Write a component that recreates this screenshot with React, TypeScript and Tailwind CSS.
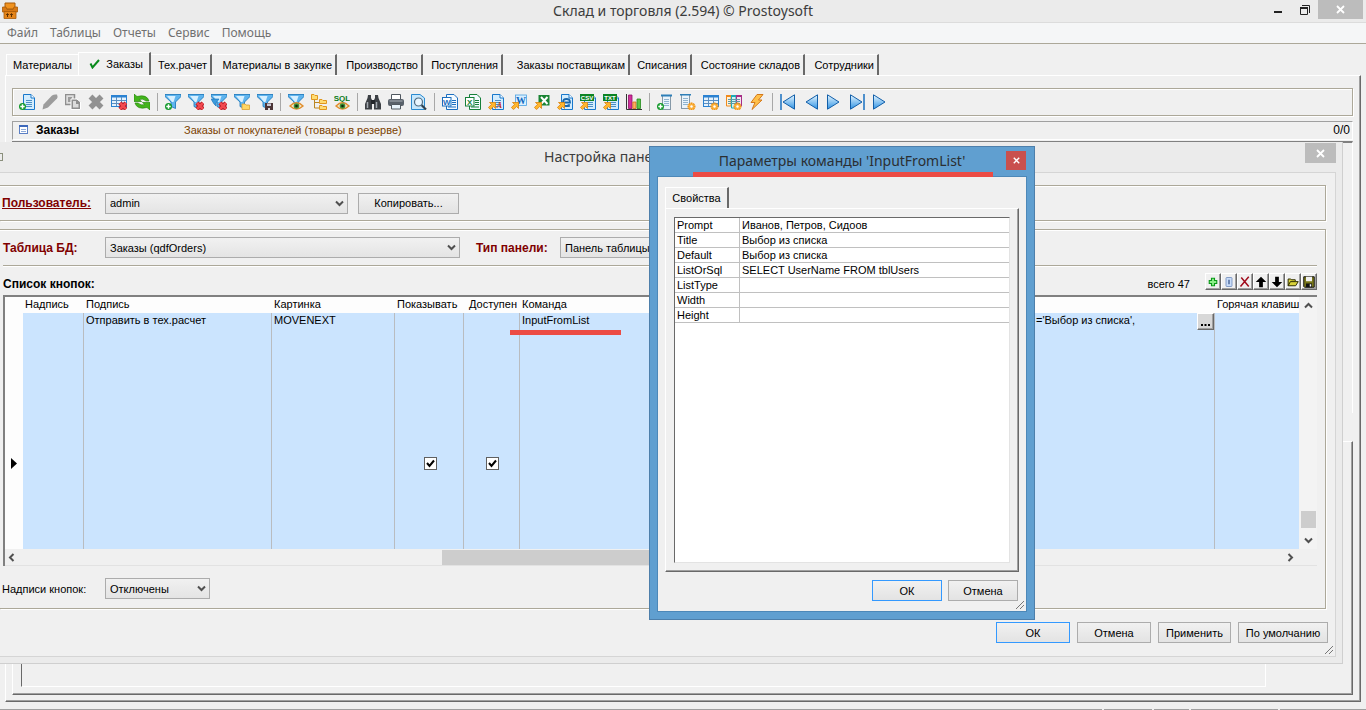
import type { ReactNode } from "react";
import { clsx } from "clsx";

/* ---------- icon parts ---------- */

const Svg = ({ children, size = 16 }: { children: ReactNode; size?: number }) => (
    <svg width={size} height={size} viewBox="0 0 16 16" fill="none" aria-hidden="true" className="shrink-0">
        {children}
    </svg>
);

const Doc = () => (
    <g>
        <path d="M4.5 .5H12L15.5 4V15.5H4.5Z" fill="#d3ecfd" stroke="#1878cc" />
        <path d="M12 .5V4H15.5" fill="#fff" stroke="#1878cc" />
        <path d="M7 6.5H13M7 8.5H13M7 10.5H13M7 12.5H13" stroke="#4b8fc4" />
    </g>
);

const Funnel = () => (
    <g>
        <path d="M0 .5H16V2.5L10.5 8V14.5L6 12.5V8L0 2.5Z" fill="#5fb4ee" stroke="#1271b8" strokeWidth=".8" />
        <path d="M2 2H10.5L8.5 8H7Z" fill="#d8f0ff" />
    </g>
);

const Plus = () => (
    <g>
        <circle cx="3.5" cy="12.5" r="3.5" fill="#13992b" />
        <path d="M3.5 10.3V14.7M1.3 12.5H5.7" stroke="#fff" strokeWidth="1.5" />
    </g>
);

const RedX = () => (
    <g>
        <path d="M9 9L15 15M15 9L9 15" stroke="#a8121c" strokeWidth="4.4" />
        <path d="M9 9L15 15M15 9L9 15" stroke="#f2484e" strokeWidth="2.6" />
    </g>
);

const Eye = () => (
    <g>
        <path d="M2 12Q8.5 5.5 15 12Q8.5 18 2 12Z" fill="#f4ead0" stroke="#e08e2e" strokeWidth="1.4" />
        <circle cx="8.5" cy="12" r="2.8" fill="#3f8f35" />
        <circle cx="8.5" cy="12" r="1.3" fill="#10280e" />
    </g>
);

const Gear = () => (
    <g>
        <path d="M11.5 7.5V15.5M7.5 11.5H15.5M8.7 8.7L14.3 14.3M14.3 8.7L8.7 14.3" stroke="#f2920c" strokeWidth="2" />
        <circle cx="11.5" cy="11.5" r="2.8" fill="#fbb03a" />
        <circle cx="11.5" cy="11.5" r="1.2" fill="#fff" />
    </g>
);

const Export = () => (
    <path d="M1.5 8.5H7.5V14.5L5.6 12.6L2.5 15.6L.4 13.5L3.5 10.4Z" fill="#ffb62e" stroke="#d9810a" strokeWidth=".8" />
);

const Table = () => (
    <g>
        <rect x=".5" y="1.5" width="15" height="11" fill="#e4f2fd" stroke="#2a82d2" />
        <path d="M1 2.5H15" stroke="#2a82d2" strokeWidth="2" />
        <path d="M1 6.5H15M1 9.5H15M5.5 3V12M10.5 3V12" stroke="#5a8fc2" />
    </g>
);

const List = () => (
    <g>
        <rect x="5.5" y="1.5" width="8" height="14" fill="#eaf4fb" stroke="#8699a8" />
        <path d="M4 1.5H15" stroke="#2d7fb8" strokeWidth="2" />
        <path d="M7 5.5H12M7 7.5H12M7 9.5H12M7 11.5H12" stroke="#8fb4d0" />
    </g>
);

const Badge = ({ text, fill }: { text: string; fill: string }) => (
    <g>
        <rect x="0" y="0" width="14" height="7" fill={fill} />
        <text x="7" y="5.8" fontSize="6" fontWeight="700" fill="#fff" textAnchor="middle" fontFamily="Liberation Sans, sans-serif">{text}</text>
    </g>
);

const OfficeDoc = ({ letter, fill }: { letter: string; fill: string }) => (
    <g>
        <path d="M4.5 .5H12L15.5 4V15.5H4.5Z" fill="#f3faff" stroke={fill} />
        <path d="M10 6.5H14M10 8.5H14M10 10.5H14M6 13H14" stroke={fill} />
        <rect x=".5" y="3.5" width="8.5" height="8.5" fill="#fff" stroke={fill} />
        <text x="4.7" y="10.5" fontSize="8" fontWeight="700" fill={fill} textAnchor="middle" fontFamily="Liberation Sans, sans-serif">{letter}</text>
    </g>
);

const Nav = ({ flip, bar }: { flip?: boolean; bar?: boolean }) => (
    <g transform={flip ? "translate(16 0) scale(-1 1)" : undefined}>
        <path d="M1.5 .8L13 8L1.5 15.2Z" fill="url(#nav)" stroke="#125ea8" strokeLinejoin="round" />
        {bar && <path d="M15 0V16" stroke="#1a70c0" strokeWidth="1.5" />}
    </g>
);

type Tool = { label: string; icon: ReactNode } | null;

const tools: Tool[] = [
    { label: "Добавить", icon: <><Doc /><Plus /></> },
    { label: "Изменить", icon: <path d="M.5 15.5L1.5 10.5L10 1.5Q12 0 15 .5Q16 2.5 15 4.5L6 13.5Z" fill="#9c9c9c" /> },
    {
        label: "Копировать запись",
        icon: (
            <>
                <path d="M.5 .5H9.5V10.5H.5Z" fill="#dedede" stroke="#8f8f8f" strokeWidth="1.5" />
                <path d="M3 3H7V8H3Z" fill="#9c9c9c" />
                <path d="M6 5H12L15.5 8V15.5H6Z" fill="#8f8f8f" stroke="#fff" />
                <path d="M8 7H11V10H13.5V13.5H8Z" fill="#dcdcdc" />
            </>
        ),
    },
    { label: "Удалить", icon: <path d="M2.5 2.5L13.5 13.5M13.5 2.5L2.5 13.5" stroke="#929292" strokeWidth="5.5" /> },
    { label: "Очистить таблицу", icon: <><Table /><RedX /></> },
    {
        label: "Обновить",
        icon: (
            <>
                <path d="M0 0V7.5H7.5L5.2 5.5Q9 4 12 7H15Q13 0 3 2.5Z" fill="#43b51c" stroke="#2a8a10" strokeWidth=".7" />
                <path d="M16 16V8.5H8.500L10.8 10.5Q7 12 4 9H1Q3 16 13 13.5Z" fill="#43b51c" stroke="#2a8a10" strokeWidth=".7" />
            </>
        ),
    },
    null,
    { label: "Добавить фильтр", icon: <><Funnel /><Plus /></> },
    { label: "Удалить фильтр", icon: <><Funnel /><RedX /></> },
    { label: "Удалить все фильтры", icon: <><Funnel /><path d="M0 5H8L5 9V12L3 10Z" fill="#3d9bdd" stroke="#1271b8" strokeWidth=".6" /><RedX /></> },
    { label: "Открыть фильтр", icon: <><Funnel /><path d="M8 10H11L12 11H15.5V15.5H8Z" fill="#ffd766" stroke="#dca030" strokeWidth=".8" /></> },
    { label: "Сохранить фильтр", icon: <><Funnel /><path d="M8 9H16V16H8Z" fill="#4b3436" /><path d="M10 9.5H14V12H10Z" fill="#c9c9d6" /><path d="M11 14H13V16H11Z" fill="#ddd" /></> },
    null,
    { label: "Просмотр фильтра", icon: <><Funnel /><Eye /></> },
    {
        label: "Дерево",
        icon: (
            <>
                <path d="M3.5 5V14H9M3.5 8.5H9" stroke="#b98622" />
                <path d="M.5 .5H3L4 1.5H6.5V5.5H.5ZM8.5 5.5H11L12 6.5H15.5V9.5H8.5ZM8.5 11.5H11L12 12.5H15.5V15.5H8.5Z" fill="#ffdc73" stroke="#e0971f" />
            </>
        ),
    },
    {
        label: "SQL",
        icon: (
            <>
                <text x="8" y="6.5" fontSize="8" fontWeight="700" fill="#087a16" textAnchor="middle" fontFamily="Liberation Sans, sans-serif">SQL</text>
                <Eye />
            </>
        ),
    },
    null,
    {
        label: "Найти",
        icon: (
            <>
                <path d="M3 1H6V4L7 6V15.5H0V10L2.5 4ZM13 1H10V4L9 6V15.5H16V10L13.5 4Z" fill="#3c4045" />
                <path d="M6 6H10V10H6Z" fill="#24272b" />
                <path d="M2.5 8V14M11.5 8V14" stroke="#a3a9b0" strokeWidth="1.5" />
            </>
        ),
    },
    {
        label: "Печать",
        icon: (
            <>
                <path d="M3.5 .5H12.5V6H3.5Z" fill="#fff" stroke="#505860" />
                <rect x="0" y="5" width="16" height="7" rx="2" fill="#59616a" />
                <path d="M1.5 7H14.5" stroke="#aab1b8" />
                <path d="M3.5 10.5H12.5V15H3.5Z" fill="#e8f3fb" stroke="#505860" />
            </>
        ),
    },
    {
        label: "Предварительный просмотр",
        icon: (
            <>
                <path d="M.5 .5H9L13.5 4V15.5H.5Z" fill="#c6e7fc" stroke="#2a8ad0" />
                <path d="M10.5 11L15 15.5" stroke="#31424f" strokeWidth="2.2" />
                <circle cx="7.5" cy="8" r="4" fill="#e9f6ff" stroke="#4f6b80" strokeWidth="1.2" />
            </>
        ),
    },
    null,
    { label: "Документ Word", icon: <OfficeDoc letter="W" fill="#1c6fc0" /> },
    { label: "Документ Excel", icon: <OfficeDoc letter="X" fill="#15803a" /> },
    { label: "Экспорт в Access", icon: <><Doc /><text x="11.5" y="13.5" fontSize="8" fontWeight="700" fontStyle="italic" fill="#d2321e" textAnchor="middle" fontFamily="Liberation Serif, serif">A</text><Export /></> },
    {
        label: "Экспорт в Word",
        icon: (
            <>
                <rect x="4.5" y="1" width="11" height="10.5" fill="#d9efff" stroke="#4aa0e0" strokeWidth=".8" />
                <text x="10" y="9.5" fontSize="10" fontWeight="700" fill="#1268be" textAnchor="middle" fontFamily="Liberation Serif, serif">W</text>
                <Export />
            </>
        ),
    },
    {
        label: "Экспорт в Excel",
        icon: (
            <>
                <rect x="4.5" y="1" width="11" height="10.5" fill="#1b8434" />
                <path d="M7 3L13.5 10M13.5 3L7 10" stroke="#fff" strokeWidth="2" />
                <Export />
            </>
        ),
    },
    {
        label: "Экспорт в HTML",
        icon: (
            <>
                <Doc />
                <path d="M6 8.5H13Q13 5 9.5 5T6 8.500T9.500 12Q11.5 12 12.500 11" fill="#dff1fd" stroke="#1766ac" strokeWidth="1.8" />
                <Export />
            </>
        ),
    },
    { label: "Экспорт в CSV", icon: <><Doc /><Badge text="CSV" fill="#0c8424" /><Export /></> },
    { label: "Экспорт в TXT", icon: <><Doc /><Badge text="TXT" fill="#0c8424" /><Export /></> },
    {
        label: "Диаграмма",
        icon: (
            <>
                <path d="M.5 0V15.5H16" stroke="#333" />
                <path d="M2.5 1H6V14.5H2.5Z" fill="#d22f9c" stroke="#8d1067" strokeWidth=".8" />
                <path d="M6.8 8H10V14.5H6.8Z" fill="#ffae62" stroke="#cf6d1b" strokeWidth=".8" />
                <path d="M11 5H14.5V14.5H11Z" fill="#59c64a" stroke="#248a1c" strokeWidth=".8" />
            </>
        ),
    },
    null,
    { label: "Добавить поле", icon: <><List /><Plus /></> },
    { label: "Свойства поля", icon: <><g transform="translate(-4 -1)"><List /></g><g transform="translate(0 1)"><Gear /></g></> },
    { label: "Свойства таблицы", icon: <><Table /><g transform="translate(0 1)"><Gear /></g></> },
    {
        label: "Настройка столбцов",
        icon: (
            <>
                <path d="M.5 1.5H5V12H.5Z" fill="#fff0d8" stroke="#f08a1c" />
                <path d="M5.5 1.5H10V14H5.5Z" fill="#d0f2f5" stroke="#1ba9b5" />
                <path d="M10.5 1.5H15.5V12H10.5Z" fill="#f6e0f0" stroke="#a52e86" />
                <path d="M0 2H5" stroke="#f08a1c" strokeWidth="2" />
                <path d="M5 2H10" stroke="#1ba9b5" strokeWidth="2" />
                <path d="M10 2H16" stroke="#a52e86" strokeWidth="2" />
                <path d="M2 5.5H14M2 7.5H14M2 9.5H14" stroke="#5f9aa5" />
                <g transform="translate(0 1)"><Gear /></g>
            </>
        ),
    },
    { label: "Выполнить", icon: <path d="M8 .5H14L9.5 6H13L3 15.5L6 8.5H2Z" fill="#ffc04a" stroke="#d4791b" /> },
    null,
    { label: "В начало", icon: <Nav flip bar /> },
    { label: "Назад", icon: <Nav flip /> },
    { label: "Вперед", icon: <Nav /> },
    { label: "В конец", icon: <Nav bar /> },
    { label: "Запуск", icon: <Nav /> },
];

const tabs = [
    { label: "Тех.рачет", width: "w-[61px]" },
    { label: "Материалы в закупке", width: "w-[125px]" },
    { label: "Производство", width: "w-[86px]" },
    { label: "Поступления", width: "w-[80px]" },
    { label: "Заказы поставщикам", width: "w-[127px]" },
    { label: "Списания", width: "w-[62px]" },
    { label: "Состояние складов", width: "w-[113px]" },
    { label: "Сотрудники", width: "w-[74px]" },
];

const params = [
    ["Prompt", "Иванов, Петров, Сидоов"],
    ["Title", "Выбор из списка"],
    ["Default", "Выбор из списка"],
    ["ListOrSql", "SELECT UserName FROM tblUsers"],
    ["ListType", ""],
    ["Width", ""],
    ["Height", ""],
];

const rowTools: { label: string; icon: ReactNode }[] = [
    { label: "Добавить кнопку", icon: <path d="M6 3H10V6H13V10H10V13H6V10H3V6H6Z" fill="#8df08a" stroke="#0a9a18" strokeWidth="1.5" /> },
    { label: "Разделитель", icon: <><rect x="4" y="2" width="8" height="12" rx="1" fill="#c9dcf8" stroke="#6683b5" /><path d="M8 5V11" stroke="#26427c" strokeWidth="1.5" /></> },
    { label: "Удалить кнопку", icon: <path d="M3 2L13 14M13 1L2 14" stroke="#a00c1c" strokeWidth="2" /> },
    { label: "Выше", icon: <path d="M8 1L15 8H10.5V15H5.500V8H1Z" fill="#000" /> },
    { label: "Ниже", icon: <path d="M8 15L15 8H10.5V1H5.500V8H1Z" fill="#000" /> },
    { label: "Открыть", icon: <path d="M1.5 13V4H5L6 5H11V7.5H15L11.5 13ZM1.5 13L4.5 7.5H11" fill="#d8d23a" stroke="#2b2a00" strokeWidth="1.3" /> },
    { label: "Сохранить", icon: <><path d="M1 1H15V15H2L1 14Z" fill="#77751a" stroke="#111" strokeWidth="1.3" /><path d="M4 1H12V7H4Z" fill="#f0f0f0" /><path d="M4 10H12V15H4Z" fill="#111" /><path d="M9 11H11V14H9Z" fill="#fff" /></> },
];

const Chevron = ({ dir = "down" }: { dir?: "up" | "down" | "left" | "right" }) => (
    <svg width="9" height="9" viewBox="0 0 9 9" fill="none" aria-hidden="true" className={clsx("shrink-0", dir === "up" && "rotate-180", dir === "left" && "rotate-90", dir === "right" && "-rotate-90")}>
        <path d="M1 2.5L4.5 6L8 2.5" stroke="#505050" strokeWidth="2" />
    </svg>
);

const Select = ({ id, value, width }: { id: string; value: string; width: string }) => (
    <div className={clsx("relative shrink-0", width)}>
        <select id={id} className="block h-[21px] w-full appearance-none border border-[#acacac] bg-linear-to-b from-[#f1f1f1] to-[#e4e4e4] pl-1 text-[11px] leading-[18px]">
            <option>{value}</option>
        </select>
        <div className="pointer-events-none absolute inset-y-0 right-1 flex items-center">
            <Chevron />
        </div>
    </div>
);

const Button = ({ children, width, primary }: { children: ReactNode; width: string; primary?: boolean }) => (
    <button type="button" className={clsx("h-[21px] shrink-0 border bg-linear-to-b from-[#f1f1f1] to-[#e3e3e3] leading-[18px]", width, primary ? "border-[#3399ff]" : "border-[#acacac]")}>
        {children}
    </button>
);

const Grip = () => (
    <svg width="8" height="8" viewBox="0 0 8 8" aria-hidden="true" className="absolute bottom-0.5 right-0.5">
        <path d="M0 8L8 0M4 8L8 4" stroke="#777" fill="none" />
    </svg>
);

const Cross = ({ size = 9 }: { size?: number }) => (
    <svg width={size} height={size} viewBox="0 0 9 9" aria-hidden="true">
        <path d="M1 1L8 8M8 1L1 8" stroke="#fff" strokeWidth="1.8" />
    </svg>
);

const CheckBox = ({ label }: { label: string }) => (
    <span className="relative mx-auto block size-[13px]">
        <input type="checkbox" defaultChecked aria-label={label} className="block size-[13px] appearance-none border border-[#606060] bg-white" />
        <svg width="13" height="13" viewBox="0 0 13 13" fill="none" aria-hidden="true" className="pointer-events-none absolute inset-0">
            <path d="M3 6L5.5 9L10 3.5" stroke="#000" strokeWidth="2" />
        </svg>
    </span>
);

const raised = "border border-l-white border-t-white border-r-[#696969] border-b-[#696969] shadow-[inset_-1px_-1px_0_#a0a0a0]";
const etched = "border border-l-0 border-[#aca899] shadow-[1px_1px_0_#fff,inset_0_1px_0_#fff]";

function TitleBar() {
    return (
        <header className="relative flex h-[22px] items-center justify-center bg-[#ebebeb]">
            <svg width="16" height="17" viewBox="0 0 16 17" aria-hidden="true" className="absolute left-0.5 top-0.5">
                <path d="M3 1H13V7H3Z" fill="#f0921e" stroke="#a85a08" />
                <path d="M.5 5H4L5 7.5H11L12 5H15.5V10H.5Z" fill="#d97812" stroke="#a85a08" strokeWidth=".8" />
                <path d="M2 9.5H14V16.5H2Z" fill="#e5851a" stroke="#a85a08" strokeWidth=".8" />
                <path d="M5.5 15V12M4.2 13L5.5 11.5L6.8 13M9.5 15V12M8.2 13L9.5 11.5L10.8 13" stroke="#5e2f00" fill="none" />
            </svg>
            <h1 className="font-['Noto_Sans',sans-serif] text-[14px] leading-[22px] text-[#3c3c3c]">Склад и торговля (2.594) © Prostoysoft</h1>
            <div className="absolute right-0 top-0 flex h-[19px] items-center pr-[3px]">
                <button type="button" aria-label="Свернуть" className="flex h-full w-[26px] items-end justify-center pb-1.5">
                    <span className="h-0.5 w-2 bg-[#222]" />
                </button>
                <button type="button" aria-label="Развернуть" className="flex h-full w-[27px] items-center justify-center">
                    <svg width="10" height="10" viewBox="0 0 10 10" fill="none" stroke="#222" aria-hidden="true">
                        <path d="M.5 3H7.5V9.5H.5ZM2 .5H9.5V8" />
                        <path d="M0 3H8" strokeWidth="2" />
                    </svg>
                </button>
                <button type="button" aria-label="Закрыть" className="flex h-full w-[45px] items-center justify-center bg-[#bcbcbc]">
                    <Cross />
                </button>
            </div>
        </header>
    );
}

function Tabs() {
    return (
        <div role="tablist" className="ml-1.5 flex h-[23px] items-end">
            <button type="button" role="tab" className="h-[21px] w-[72px] border-l border-t border-white text-center">Материалы</button>
            <button type="button" role="tab" aria-selected="true" className="flex h-[23px] w-[73px] items-center justify-end gap-1.5 border-l border-r-2 border-t border-l-white border-r-[#696969] border-t-white pr-1.5">
                <svg width="11" height="10" viewBox="0 0 11 10" fill="none" aria-hidden="true">
                    <path d="M1.5 4.5L3.5 8.5L10 1" stroke="#0a8a1c" strokeWidth="2" />
                </svg>
                Заказы
            </button>
            {tabs.map((t) => (
                <button key={t.label} type="button" role="tab" className={clsx("h-[21px] whitespace-nowrap border-r-2 border-t border-r-[#696969] border-t-white pr-[3px] text-right", t.width)}>
                    {t.label}
                </button>
            ))}
        </div>
    );
}

function Toolbar() {
    return (
        <div role="toolbar" className="flex h-7 items-center border border-[#aca899] pl-0.5 shadow-[1px_1px_0_#fff,inset_1px_1px_0_#fff]">
            {tools.map((t, i) =>
                t ? (
                    <button key={t.label} type="button" aria-label={t.label} className="flex h-6 w-[23px] shrink-0 items-center justify-center">
                        <Svg>{t.icon}</Svg>
                    </button>
                ) : (
                    <span key={i} className="flex h-[18px] w-2 shrink-0 justify-center">
                        <span className="w-px bg-[#a8a8a8]" />
                    </span>
                ),
            )}
        </div>
    );
}

function ButtonsGrid() {
    return (
        <div className="border-l-2 border-t-2 border-[#808080] bg-[#fdfdfd]">
            <div className="flex h-[252px]">
                <div className="min-w-0 flex-1 overflow-hidden">
                    <table className="w-full table-fixed border-separate border-spacing-0 text-left">
                        <colgroup>
                            <col className="w-[18px]" />
                            <col className="w-[61px]" />
                            <col className="w-[188px]" />
                            <col className="w-[123px]" />
                            <col className="w-[69px]" />
                            <col className="w-[56px]" />
                            <col />
                            <col className="w-[183px]" />
                            <col className="w-[84px]" />
                        </colgroup>
                        <thead>
                            <tr className="h-4 whitespace-nowrap align-top *:p-0 *:pl-0.5 *:font-normal *:leading-[14px]">
                                <td />
                                <th>Надпись</th>
                                <th>Подпись</th>
                                <th>Картинка</th>
                                <th>Показывать</th>
                                <th className="text-center">Доступен</th>
                                <th>Команда</th>
                                <td />
                                <th>Горячая клавиш</th>
                            </tr>
                        </thead>
                        <tbody>
                            <tr className="h-[300px] bg-[#cbe4fe] align-top leading-[15px] *:border-r *:border-[#b9bcc0] *:p-0 *:pl-0.5">
                                <td className="border-none! bg-[#fdfdfd] align-middle">
                                    <svg width="6" height="11" viewBox="0 0 6 11" aria-label="Текущая запись" className="ml-1">
                                        <path d="M0 0L6 5.5L0 11Z" fill="#000" />
                                    </svg>
                                </td>
                                <td />
                                <td>Отправить в тех.расчет</td>
                                <td>MOVENEXT</td>
                                <td className="align-middle"><CheckBox label="Показывать" /></td>
                                <td className="align-middle"><CheckBox label="Доступен" /></td>
                                <td className="relative">
                                    InputFromList
                                    <span className="absolute -left-2.5 top-[17px] h-[5px] w-[111px] bg-[#ec4b44]" />
                                </td>
                                <td>
                                    <div className="flex justify-between pl-0.5">
                                        <span>='Выбор из списка',</span>
                                        <button type="button" aria-label="Изменить параметры" className={clsx("flex size-[17px] items-end justify-center bg-[#d8d8d8] pb-[3px]", raised)}>
                                            <svg width="9" height="2" viewBox="0 0 9 2" aria-hidden="true">
                                                <path d="M0 0H2V2H0ZM3.5 0H5.5V2H3.5ZM7 0H9V2H7Z" fill="#000" />
                                            </svg>
                                        </button>
                                    </div>
                                </td>
                                <td className="border-none!" />
                            </tr>
                        </tbody>
                    </table>
                </div>
                <div className="flex w-[18px] flex-col items-center bg-[#f3f3f3] py-1">
                    <Chevron dir="up" />
                    <span className="mt-auto h-[17px] w-[15px] bg-[#cdcdcd]" />
                    <span className="mt-2"><Chevron /></span>
                </div>
            </div>
            <div className="flex h-[17px] items-center border-b border-[#e2e2e2] bg-[#f0f0f0] pl-0.5 pr-[22px]">
                <Chevron dir="left" />
                <span className="ml-[426px] h-[15px] w-[300px] bg-[#cdcdcd]" />
                <span className="ml-auto flex"><Chevron dir="right" /></span>
            </div>
        </div>
    );
}

function PanelSettings() {
    return (
        <section className="absolute left-0 right-[23px] top-[142px] border-b border-r border-[#cfcfcf] bg-[#ebebeb] pb-1.5 pr-1.5">
            <div className="relative flex h-[30px] items-center">
                <svg width="3" height="8" viewBox="0 0 3 8" aria-hidden="true" className="shrink-0">
                    <path d="M0 .5H3M0 7.5H3M2.5 0V8" stroke="#8a8f7c" />
                </svg>
                <h2 className="ml-[541px] font-['Noto_Sans',sans-serif] text-[14px] leading-[30px] text-[#3c3c3c]">Настройка панели</h2>
                <button type="button" aria-label="Закрыть" className="absolute right-0 top-px flex h-5 w-[31px] items-center justify-center bg-[#bcbcbc]">
                    <Cross />
                </button>
            </div>
            <div className="relative border border-l-0 border-[#d5d5d5] bg-[#f0f0f0] pb-[13px] pr-[9px] pt-3">
                <div className={clsx("flex h-9 items-center pl-0.5", etched)}>
                    <label htmlFor="user" className="w-[103px] text-xs font-bold text-[#800000] underline">Пользователь:</label>
                    <Select id="user" value="admin" width="w-[243px]" />
                    <div className="ml-2.5">
                        <Button width="w-[101px]">Копировать...</Button>
                    </div>
                </div>

                <div className={clsx("mt-2 flex flex-col pb-[9px] pr-2", etched)}>
                    <div className="ml-[3px] flex h-9 items-center border-b border-[#aca899] shadow-[0_1px_0_#fff]">
                        <label htmlFor="dbtable" className="w-[102px] text-xs font-bold text-[#800000]">Таблица БД:</label>
                        <Select id="dbtable" value="Заказы (qdfOrders)" width="w-[355px]" />
                        <label htmlFor="paneltype" className="ml-4 w-[84px] text-xs font-bold text-[#800000]">Тип панели:</label>
                        <Select id="paneltype" value="Панель таблицы" width="w-[220px]" />
                    </div>
                    <div className="ml-[3px] mt-1.5 flex h-[23px] items-center">
                        <h3 className="mr-auto text-xs font-bold">Список кнопок:</h3>
                        <span className="mr-[15px]">всего 47</span>
                        <div className="mb-1 flex">
                            {rowTools.map((t) => (
                                <button key={t.label} type="button" aria-label={t.label} className={clsx("flex h-[17px] w-4 items-center justify-center", raised)}>
                                    <Svg size={12}>{t.icon}</Svg>
                                </button>
                            ))}
                        </div>
                    </div>
                    <div className="ml-[3px]">
                        <ButtonsGrid />
                    </div>
                    <div className="mt-3 flex items-center pl-0.5">
                        <label htmlFor="captions" className="w-[103px]">Надписи кнопок:</label>
                        <Select id="captions" value="Отключены" width="w-[105px]" />
                    </div>
                </div>

                <div className="-mr-1 mt-[13px] flex justify-end gap-[7px] pr-0.5">
                    <Button width="w-[74px]" primary>ОК</Button>
                    <Button width="w-[74px]">Отмена</Button>
                    <Button width="w-[73px]">Применить</Button>
                    <Button width="w-[90px]">По умолчанию</Button>
                </div>
                <Grip />
            </div>
        </section>
    );
}

function CommandDialog() {
    return (
        <section role="dialog" aria-labelledby="cmd-title" className="absolute left-[649px] top-[146px] w-[386px] border border-[#4d7fab] bg-[#609fd0] px-[7px] pb-[7px]">
            <div className="relative flex h-[29px] items-start justify-center">
                <h2 id="cmd-title" className="font-['Noto_Sans',sans-serif] text-[14px] leading-7 text-[#2b2f33]">Параметры команды 'InputFromList'</h2>
                <button type="button" aria-label="Закрыть" className="absolute right-px top-1 flex h-[19px] w-5 items-center justify-center bg-[#c9504e]">
                    <Cross size={7} />
                </button>
                <span className="absolute -bottom-px left-9 z-10 h-[5px] w-[300px] bg-[#ec4b44]" />
            </div>
            <div className="relative border border-[#4d88b8] bg-[#f0f0f0] pb-2.5 pl-[7px] pr-2 pt-2.5">
                <div role="tablist" className="flex">
                    <button type="button" role="tab" aria-selected="true" className="h-[21px] w-[64px] border-l border-r-2 border-t border-l-white border-r-[#696969] border-t-white">Свойства</button>
                </div>
                <div className={clsx("-mr-px h-[364px] p-2", raised)}>
                    <div className="h-full border border-b-[#e3e3e3] border-l-[#696969] border-r-[#e3e3e3] border-t-[#696969] bg-white">
                        <table className="w-full table-fixed border-separate border-spacing-0 text-left">
                            <colgroup>
                                <col className="w-[65px]" />
                                <col />
                            </colgroup>
                            <tbody>
                                {params.map(([name, value]) => (
                                    <tr key={name} className="h-[15px] leading-[14px] *:border-b *:border-[#c0c0c0] *:p-0 *:pl-0.5">
                                        <th className="border-r font-normal">{name}</th>
                                        <td>{value}</td>
                                    </tr>
                                ))}
                            </tbody>
                        </table>
                    </div>
                </div>
                <div className="mt-2 flex justify-end gap-1.5">
                    <Button width="w-[70px]" primary>ОК</Button>
                    <Button width="w-[70px]">Отмена</Button>
                </div>
                <Grip />
            </div>
        </section>
    );
}

export default function App() {
    return (
        <div className="relative flex min-h-screen flex-col overflow-hidden bg-[#f0f0f0] font-['Liberation_Sans',Arial,sans-serif] text-[11px] leading-4 text-black">
            <svg width="0" height="0" aria-hidden="true" className="absolute">
                <defs>
                    <linearGradient id="nav" x1="0" y1="0" x2="0" y2="1">
                        <stop offset="0" stopColor="#e6f6ff" />
                        <stop offset="1" stopColor="#2f93e4" />
                    </linearGradient>
                </defs>
            </svg>
            <TitleBar />
            <nav className="flex h-[22px] items-center gap-3 border-b border-t border-b-[#aca899] border-t-[#dcdcdc] bg-[#f5f6f7] pl-[7px] font-['Noto_Sans',sans-serif] text-xs text-[#707070]">
                <a href="#file">Файл</a>
                <a href="#tables">Таблицы</a>
                <a href="#reports">Отчеты</a>
                <a href="#service">Сервис</a>
                <a href="#help">Помощь</a>
            </nav>
            <div className="mt-2">
                <Tabs />
            </div>
            <main className={clsx("mx-[5px] mb-[7px] flex flex-1 flex-col pb-1.5 pl-1.5 pr-[7px] pt-3", raised)}>
                <Toolbar />
                <div className="mt-[5px] flex h-[19px] items-center border border-b-white border-l-[#a0a0a0] border-r-white border-t-[#a0a0a0] pb-0.5 pl-1.5 pr-0.5">
                    <svg width="9" height="9" viewBox="0 0 9 9" aria-hidden="true">
                        <rect x=".5" y=".5" width="8" height="8" fill="#fff" stroke="#5b7fc4" />
                        <path d="M0 1H9" stroke="#3d68bb" strokeWidth="2" />
                        <path d="M2 4.5H7M2 6.5H7" stroke="#8ea9d8" />
                    </svg>
                    <h2 className="ml-2 w-[148px] text-xs font-bold">Заказы</h2>
                    <span className="text-[#7b3f00]">Заказы от покупателей (товары в резерве)</span>
                    <span className="ml-auto text-xs">0/0</span>
                </div>
                <div className="mt-px h-[272px] border-r border-t-2 border-r-white border-t-[#808080]" />
                <div className={clsx("mt-7 flex flex-1 flex-col px-2 pb-[7px]", raised)}>
                    <div className="mr-[78px] flex-1 border border-b-white border-l-[#696969] border-r-white border-t-[#696969]" />
                </div>
            </main>
            <footer className="flex h-px gap-0.5">
                <div className="flex-1 bg-[#a0a0a0]" />
                <div className="w-12 bg-[#a0a0a0]" />
                <div className="w-[35px] bg-[#a0a0a0]" />
                <div className="w-[87px] bg-[#a0a0a0]" />
                <div className="w-[86px] bg-[#a0a0a0]" />
            </footer>
            <PanelSettings />
            <CommandDialog />
        </div>
    );
}
